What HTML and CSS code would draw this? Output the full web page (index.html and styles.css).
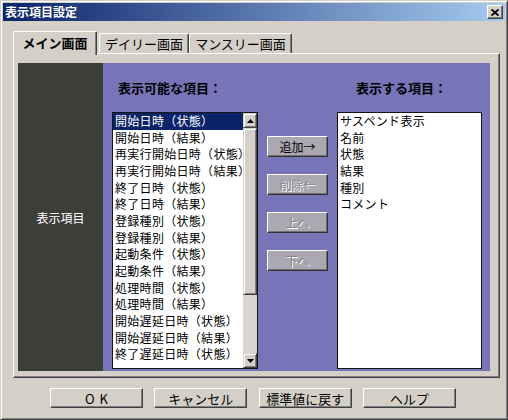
FILE: index.html
```html
<!DOCTYPE html>
<html lang="ja">
<head>
<meta charset="utf-8">
<title>表示項目設定</title>
<link rel="stylesheet" href="styles.css">
</head>
<body>
<div class="window">
  <div class="titlebar">
    <span class="title">表示項目設定</span>
    <div class="close">
      <svg width="8" height="7" viewBox="0 0 8 7"><path d="M0.5 0.5 L7.5 6.5 M7.5 0.5 L0.5 6.5" stroke="#000" stroke-width="1.9" fill="none"/></svg>
    </div>
  </div>
  <div class="body">
    <div class="tabs">
      <div class="tab active">メイン画面</div>
      <div class="tab t2">デイリー画面</div>
      <div class="tab t3">マンスリー画面</div>
    </div>
    <div class="panel">
      <div class="side">表示項目</div>
      <div class="main">
        <div class="label l1">表示可能な項目：</div>
        <div class="spacer"></div>
        <div class="label l2">表示する項目：</div>
        <div class="listbox left">
          <div class="items">
            <div class="item selected">開始日時（状態）</div>
            <div class="item">開始日時（結果）</div>
            <div class="item">再実行開始日時（状態）</div>
            <div class="item">再実行開始日時（結果）</div>
            <div class="item">終了日時（状態）</div>
            <div class="item">終了日時（結果）</div>
            <div class="item">登録種別（状態）</div>
            <div class="item">登録種別（結果）</div>
            <div class="item">起動条件（状態）</div>
            <div class="item">起動条件（結果）</div>
            <div class="item">処理時間（状態）</div>
            <div class="item">処理時間（結果）</div>
            <div class="item">開始遅延日時（状態）</div>
            <div class="item">開始遅延日時（結果）</div>
            <div class="item">終了遅延日時（状態）</div>
          </div>
          <div class="scrollbar">
            <div class="sb-btn">
              <svg width="7" height="4" viewBox="0 0 7 4"><path d="M3.5 0 L7 4 L0 4 Z" fill="#000"/></svg>
            </div>
            <div class="thumb"></div>
            <div class="track"></div>
            <div class="sb-btn">
              <svg width="7" height="4" viewBox="0 0 7 4"><path d="M0 0 L7 0 L3.5 4 Z" fill="#000"/></svg>
            </div>
          </div>
        </div>
        <div class="mid">
          <div class="mbtn">追加→</div>
          <div class="mbtn disabled">削除←</div>
          <div class="mbtn disabled">上へ</div>
          <div class="mbtn disabled">下へ</div>
        </div>
        <div class="listbox right">
          <div class="item">サスペンド表示</div>
          <div class="item">名前</div>
          <div class="item">状態</div>
          <div class="item">結果</div>
          <div class="item">種別</div>
          <div class="item">コメント</div>
        </div>
      </div>
    </div>
    <div class="footer">
      <div class="btn ok">OK</div>
      <div class="btn">キャンセル</div>
      <div class="btn">標準値に戻す</div>
      <div class="btn">ヘルプ</div>
    </div>
  </div>
</div>
</body>
</html>
```
FILE: styles.css
```css
* { box-sizing: border-box; margin: 0; padding: 0; }

body {
  width: 508px;
  height: 420px;
  overflow: hidden;
  background: #d4d0c8;
  font-family: "Noto Sans CJK JP", "Noto Sans", sans-serif;
  font-size: 12px;
  color: #000;
}

.window {
  width: 508px;
  height: 420px;
  background: #d4d0c8;
  border: 1px solid;
  border-color: #d4d0c8 #404040 #404040 #d4d0c8;
  box-shadow: inset 1px 1px #fff, inset -1px -1px #808080;
  padding: 2px;
  display: flex;
  flex-direction: column;
}

.titlebar {
  height: 18px;
  flex: none;
  background: linear-gradient(to right, #0a246a, #a6caf0);
  display: flex;
  align-items: center;
  justify-content: space-between;
  padding: 0 2px;
}

.title {
  color: #fff;
  font-weight: bold;
  font-size: 12px;
  line-height: 18px;
}

.close {
  width: 16px;
  height: 14px;
  background: #d4d0c8;
  border: 1px solid;
  border-color: #fff #404040 #404040 #fff;
  box-shadow: inset -1px -1px #808080;
  display: flex;
  align-items: center;
  justify-content: center;
}

.body {
  flex: 1;
  display: flex;
  flex-direction: column;
  padding: 10px 5px 0 10px;
}

.tabs {
  height: 22px;
  display: flex;
  align-items: flex-end;
  position: relative;
  z-index: 1;
}

.tab {
  height: 20px;
  background: #d4d0c8;
  border-top: 1px solid #fff;
  border-left: 1px solid #fff;
  border-right: 1px solid #404040;
  box-shadow: inset -1px 0 #808080;
  border-radius: 2px 2px 0 0;
  font-size: 13px;
  line-height: 19px;
  text-align: center;
}

.tab.active {
  align-self: flex-start;
  height: 24px;
  width: 84px;
  font-weight: bold;
  line-height: 21px;
}

.tab.t2 { width: 90px; margin-left: 2px; }
.tab.t3 { width: 103px; }

.panel {
  height: 325px;
  border: 1px solid;
  border-color: #fff #404040 #404040 #fff;
  box-shadow: inset -1px -1px #808080;
  padding: 9px 9px 6px 4px;
  display: flex;
}

.side {
  width: 85px;
  background: #3c3e3a;
  color: #fff;
  display: flex;
  align-items: center;
  justify-content: center;
  font-size: 12px;
}

.main {
  flex: 1;
  background: #7874b8;
  padding: 0 8px 0 9px;
  display: grid;
  grid-template-columns: 146px 61px 145px;
  grid-template-rows: 49px 257px;
  column-gap: 9px;
}

.label {
  font-weight: bold;
  font-size: 13px;
  line-height: 14px;
  padding-top: 18px;
  white-space: nowrap;
}
.label.l1 { padding-left: 6px; }
.label.l2 { padding-left: 19px; }

.listbox {
  background: #fff;
  border: 1px solid #141414;
  overflow: hidden;
}

.listbox.left { display: flex; }

.items {
  flex: 1;
  min-width: 0;
  overflow: hidden;
}

.item {
  height: 16.67px;
  line-height: 16.67px;
  padding-left: 2px;
  white-space: nowrap;
  overflow: hidden;
  letter-spacing: 0.3px;
}

.item.selected {
  background: #0a246a;
  color: #fff;
}

.scrollbar {
  width: 14px;
  flex: none;
  display: flex;
  flex-direction: column;
  background: #d4d0c8;
}

.sb-btn, .thumb {
  background: #d4d0c8;
  border: 1px solid;
  border-color: #d4d0c8 #404040 #404040 #d4d0c8;
  box-shadow: inset 1px 1px #fff, inset -1px -1px #808080;
}

.sb-btn {
  height: 15px;
  display: flex;
  align-items: center;
  justify-content: center;
}

.thumb { height: 167px; }
.track { flex: 1; background: #d8d5ce; }

.mid {
  display: flex;
  flex-direction: column;
  padding-top: 24px;
  gap: 17px;
}

.mbtn {
  height: 21px;
  background: #aca8b2;
  border: 1px solid;
  border-color: #fff #303030 #303030 #fff;
  box-shadow: inset -1px -1px #707070;
  display: flex;
  align-items: center;
  justify-content: center;
  font-size: 12px;
}

.mbtn.disabled {
  color: #86838c;
  text-shadow: 1px 1px 0 #fff;
}

.footer {
  display: flex;
  gap: 11.33px;
  padding-top: 10px;
  padding-left: 37px;
}

.btn {
  width: 93px;
  height: 20px;
  background: #d4d0c8;
  border: 1px solid;
  border-color: #fff #404040 #404040 #fff;
  box-shadow: inset -1px -1px #808080;
  display: flex;
  align-items: center;
  justify-content: center;
  font-size: 13px;
}

.btn.ok {
  letter-spacing: 5px;
  padding-left: 5px;
}
```
